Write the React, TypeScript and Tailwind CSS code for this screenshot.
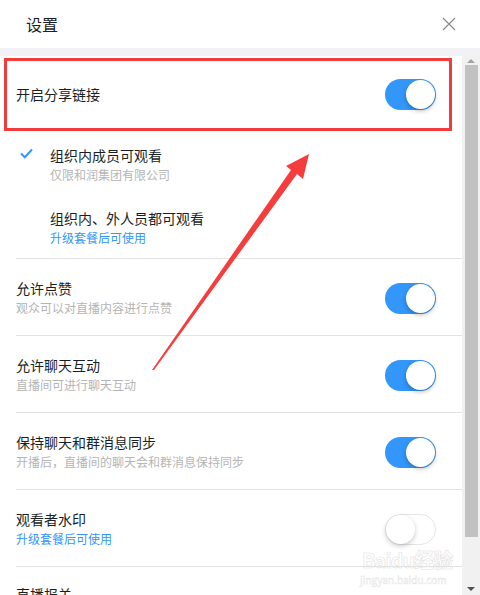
import React from "react";

const font = { fontFamily: '"Noto Sans CJK SC", "Noto Sans", sans-serif' };

function Toggle({ on }: { on: boolean }) {
  return on ? (
    <div className="relative w-[51px] h-[31px] rounded-full bg-[#3296fa] shrink-0">
      <div className="absolute right-[1px] top-[1px] w-[29px] h-[29px] rounded-full bg-white shadow-[0_2px_4px_rgba(0,0,0,0.25)]" />
    </div>
  ) : (
    <div className="relative w-[51px] h-[31px] rounded-full bg-white border border-[#e5e5e5] shrink-0">
      <div className="absolute left-0 top-0 w-[29px] h-[29px] rounded-full bg-white shadow-[0_2px_5px_rgba(0,0,0,0.22)]" />
    </div>
  );
}

function Row({ title, sub, blue, on }: { title: string; sub: string; blue?: boolean; on: boolean }) {
  return (
    <div className="ml-4 border-t border-[#e3e3e3] pt-[19px] pb-[17px] pr-[26px] flex items-center justify-between">
      <div>
        <div className="text-[14px] leading-[20px] text-[#191f25]">{title}</div>
        <div className={`text-[12px] leading-[20px] ${blue ? "text-[#3296fa]" : "text-[#b5b5b5]"}`}>{sub}</div>
      </div>
      <Toggle on={on} />
    </div>
  );
}

export default function App() {
  return (
    <div className="relative w-[480px] h-[595px] overflow-hidden bg-white" style={font}>
      <div className="h-[48px] flex items-center justify-between pl-[26px] pr-[24px]">
        <div className="text-[16px] text-[#191f25]">设置</div>
        <svg width="14" height="14" viewBox="0 0 14 14">
          <path d="M1 1L13 13M13 1L1 13" stroke="#8a8a8a" strokeWidth="1.2" />
        </svg>
      </div>
      <div className="h-[8px] bg-[#f2f2f6]" />
      <div className="flex h-[539px]">
        <div className="flex-1 overflow-hidden">
          <div className="h-[80px] pl-4 pr-[26px] pb-[3px] flex items-center justify-between">
            <div className="text-[14px] text-[#191f25]">开启分享链接</div>
            <Toggle on={true} />
          </div>
          <div className="pt-[9px] pb-[12px] flex">
            <div className="w-[50px] pl-[20px] pt-[3px]">
              <svg width="13" height="11" viewBox="0 0 13 11">
                <path d="M1 5.5L4.8 9.3L12 1.5" stroke="#3296fa" strokeWidth="2" fill="none" />
              </svg>
            </div>
            <div>
              <div className="text-[14px] leading-[20px] text-[#191f25]">组织内成员可观看</div>
              <div className="text-[12px] leading-[20px] text-[#b5b5b5]">仅限和润集团有限公司</div>
            </div>
          </div>
          <div className="pt-[11px] pb-[10px] pl-[50px]">
            <div className="text-[14px] leading-[20px] text-[#191f25]">组织内、外人员都可观看</div>
            <div className="text-[12px] leading-[20px] text-[#3296fa]">升级套餐后可使用</div>
          </div>
          <Row title="允许点赞" sub="观众可以对直播内容进行点赞" on={true} />
          <Row title="允许聊天互动" sub="直播间可进行聊天互动" on={true} />
          <Row title="保持聊天和群消息同步" sub="开播后，直播间的聊天会和群消息保持同步" on={true} />
          <Row title="观看者水印" sub="升级套餐后可使用" blue on={false} />
          <div className="ml-4 border-t border-[#e3e3e3] pt-[17px]">
            <div className="text-[14px] leading-[20px] text-[#191f25]">直播报关</div>
          </div>
        </div>
        <div className="w-[18px] bg-[#f1f1f1] flex flex-col items-center">
          <div className="h-[9px] flex items-center justify-center">
            <div className="w-0 h-0 border-l-[4px] border-r-[4px] border-b-[4px] border-l-transparent border-r-transparent border-b-[#a3a3a3]" />
          </div>
          <div className="w-[13px] h-[472px] bg-[#c1c1c1]" />
          <div className="flex-1" />
          <div className="h-[12px] flex items-center justify-center">
            <div className="w-0 h-0 border-l-[4px] border-r-[4px] border-t-[4px] border-l-transparent border-r-transparent border-t-[#505050]" />
          </div>
        </div>
      </div>

      {/* annotation box */}
      <div className="absolute left-[4px] top-[58px] w-[448px] h-[73px] border-[3px] border-[#f23b3b]" />

      {/* annotation arrow */}
      <svg className="absolute left-0 top-0" width="480" height="595" viewBox="0 0 480 595">
        <polygon
          points="309,154 286,166 291,170 152,370 154,370 297,174 303,179"
          fill="#f63d3d"
        />
      </svg>

      {/* watermark */}
      <div className="absolute left-[362px] top-[550px] leading-none text-transparent select-none" style={{ WebkitTextStroke: "0.6px #e2e2e2" }}>
        <div className="text-[20px] font-bold tracking-[-1px] leading-[20px]">Baidu经验</div>
        <div className="text-[10px] leading-[10px] mt-[5px] ml-[-2px]" style={{ WebkitTextStroke: "0.4px #e2e2e2" }}>jingyan.baidu.com</div>
      </div>
    </div>
  );
}
